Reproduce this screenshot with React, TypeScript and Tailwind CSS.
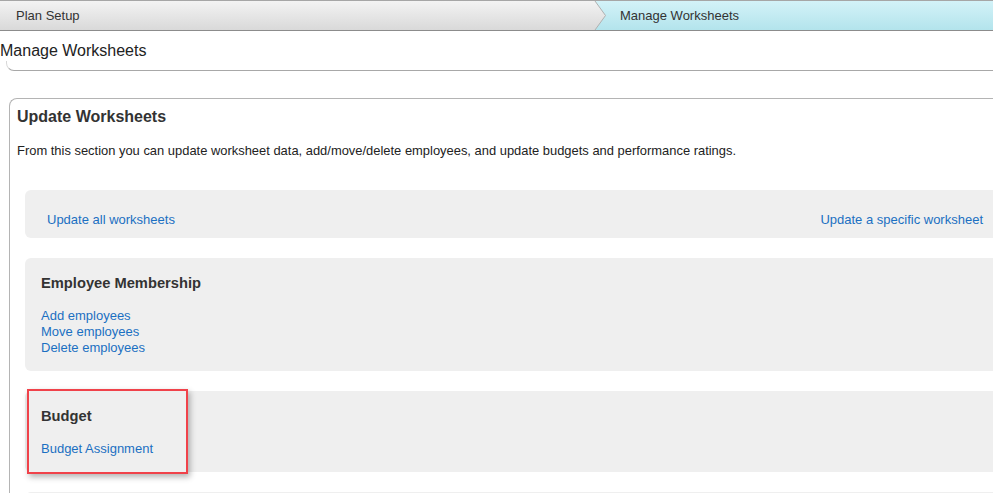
import React from "react";

const font = { fontFamily: '"Liberation Sans", Arial, sans-serif' };

function Breadcrumb() {
  return (
    <div className="flex h-[31px] border-t border-b border-t-[#a6a6a6] border-b-[#8c8c8c]">
      <div className="w-[594px] flex items-center pl-[16px] text-[13px] text-[#333] bg-gradient-to-b from-[#f3f3f3] to-[#d9d9d9]">
        Plan Setup
      </div>
      <svg width="13" height="29" viewBox="0 0 13 29" className="block shrink-0">
        <defs>
          <linearGradient id="cy" x1="0" y1="0" x2="0" y2="1">
            <stop offset="0" stopColor="#d3f2f8" />
            <stop offset="1" stopColor="#b3e4ec" />
          </linearGradient>
          <linearGradient id="gr" x1="0" y1="0" x2="0" y2="1">
            <stop offset="0" stopColor="#f3f3f3" />
            <stop offset="1" stopColor="#d9d9d9" />
          </linearGradient>
        </defs>
        <rect width="13" height="29" fill="url(#cy)" />
        <polygon points="0,0 1,0 11.5,14.5 1,29 0,29" fill="url(#gr)" />
        <polyline points="1,0 11.5,14.5 1,29" fill="none" stroke="#b0b0b0" strokeWidth="1" />
      </svg>
      <div className="flex-1 flex items-center pl-[13px] text-[13px] text-[#333] bg-gradient-to-b from-[#d3f2f8] to-[#b3e4ec]">
        Manage Worksheets
      </div>
    </div>
  );
}

function Link({ children }: { children: React.ReactNode }) {
  return <a className="text-[13px] leading-[16px] text-[#1b6fc2] cursor-pointer">{children}</a>;
}

export default function App() {
  return (
    <div className="w-[993px] h-[493px] overflow-hidden bg-white relative" style={font}>
      <Breadcrumb />
      <div className="h-[30px] flex items-end text-[16px] leading-[20px] text-[#222]">
        <span>Manage Worksheets</span>
      </div>
      <div className="ml-[6px] h-[10px] border-b border-l border-[#a8a8a8] border-l-[#d8d8d8] rounded-bl-[8px]" />

      <div className="mt-[27px] ml-[9px] w-[1000px] border-t border-l border-[#b4b4b4] rounded-tl-[8px] pl-[7px] pt-[8px]">
        <h2 className="text-[16px] leading-[20px] font-bold text-[#333]">Update Worksheets</h2>
        <p className="mt-[16px] text-[12.93px] leading-[16px] text-[#222]">
          From this section you can update worksheet data, add/move/delete employees, and update budgets and performance ratings.
        </p>

        <div className="mt-[31px] ml-[8px] flex flex-col gap-[20px]">
          <div className="h-[48px] rounded-[6px] bg-[#efefef] flex items-end justify-between pl-[22px] pr-[26px] pb-[10px]">
            <Link>Update all worksheets</Link>
            <Link>Update a specific worksheet</Link>
          </div>

          <div className="h-[113px] rounded-[6px] bg-[#efefef] pl-[16px] pt-[16px]">
            <h3 className="text-[14.7px] leading-[18px] font-bold text-[#333]">Employee Membership</h3>
            <div className="mt-[16px] flex flex-col">
              <Link>Add employees</Link>
              <Link>Move employees</Link>
              <Link>Delete employees</Link>
            </div>
          </div>

          <div className="h-[81px] rounded-[6px] bg-[#efefef] pl-[16px] pt-[16px]">
            <h3 className="text-[14.7px] leading-[18px] font-bold text-[#333]">Budget</h3>
            <div className="mt-[16px] flex flex-col">
              <Link>Budget Assignment</Link>
            </div>
          </div>

          <div className="h-[60px] rounded-[6px] bg-[#efefef]" />
        </div>
      </div>

      <div className="absolute left-[27px] top-[389px] w-[161px] h-[85px] border-2 border-[#f0424a] shadow-[2px_3px_6px_rgba(0,0,0,0.3)]" />
    </div>
  );
}
